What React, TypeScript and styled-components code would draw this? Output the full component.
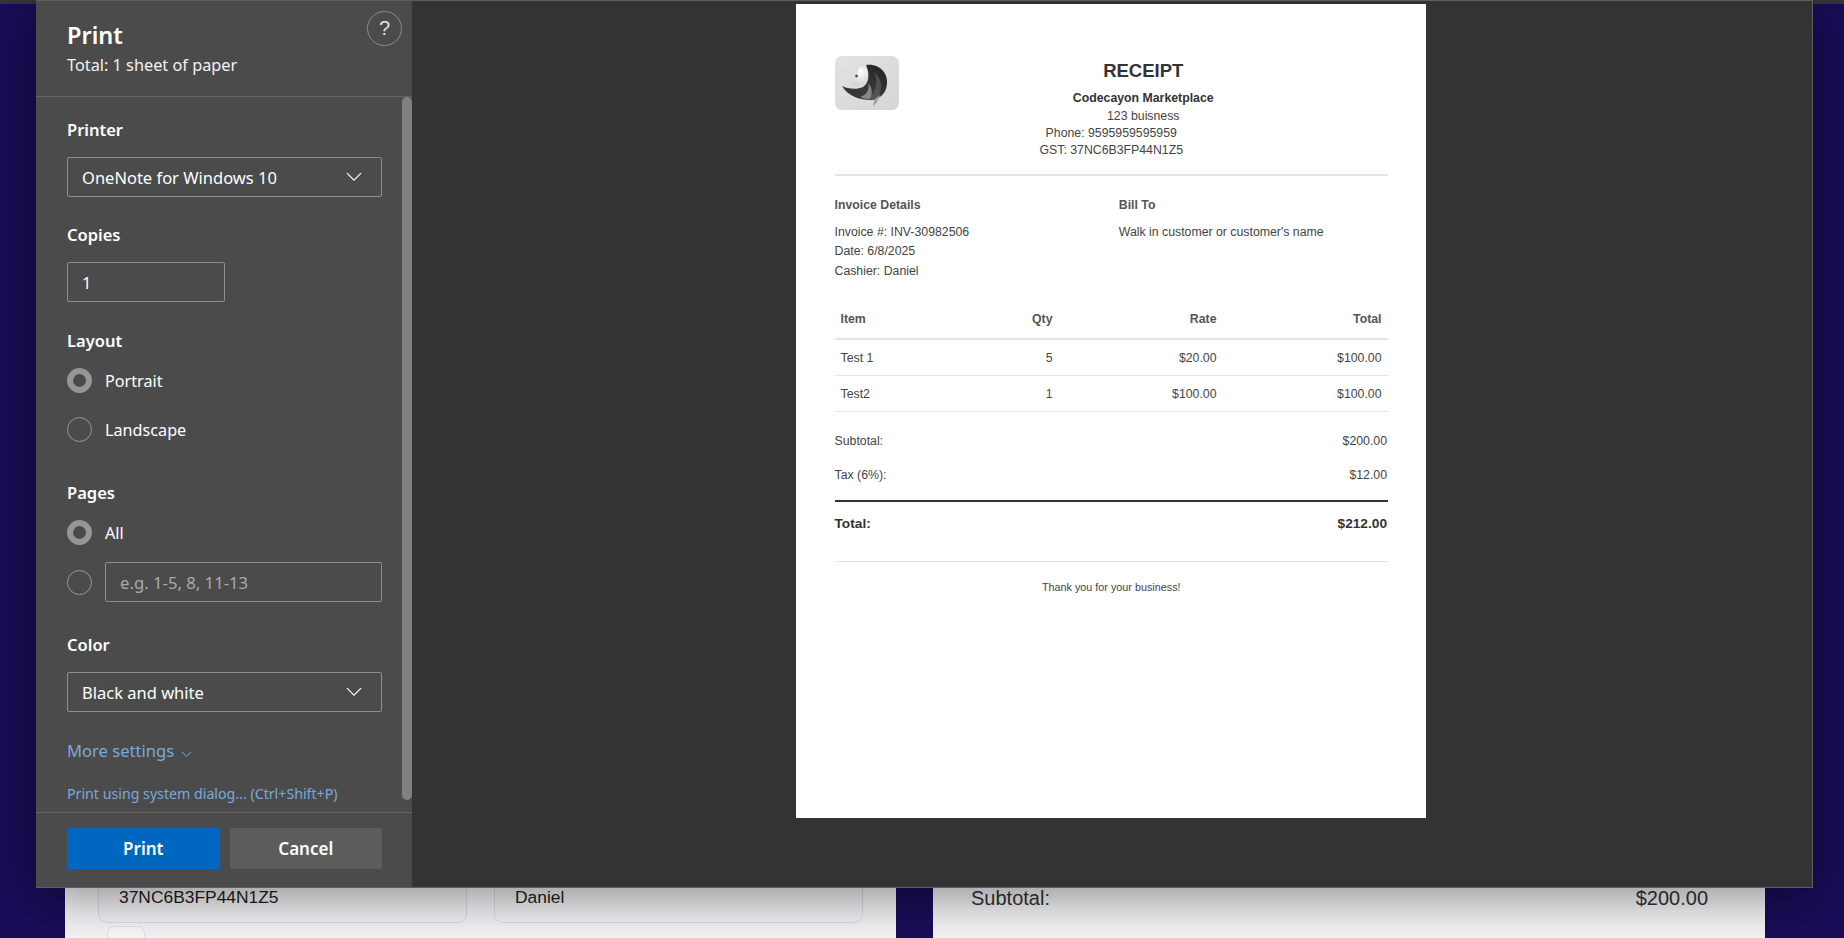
import React from "react";
import styled, { createGlobalStyle } from "styled-components";

const GlobalStyle = createGlobalStyle`
  html, body {
    margin: 0;
    padding: 0;
    height: 100%;
    overflow: hidden;
    background: #1a0c58;
  }
  * {
    box-sizing: border-box;
  }
`;

const Screen = styled.div`
  position: relative;
  width: 1844px;
  height: 938px;
  overflow: hidden;
  background: #1a0c58;
  font-family: "Liberation Sans", Arial, sans-serif;
`;

/* ---- page behind the print dialog ---- */

const TopStrip = styled.div`
  height: 4px;
  background: #363636;
`;

const Behind = styled.div`
  display: grid;
  grid-template-columns: 831px 832px;
  column-gap: 37px;
  padding-left: 65px;
  height: 934px;
`;

const PagePanel = styled.div`
  background: #f6f6f9;
  padding: ${({ $right }) => ($right ? "882px 57px 0 38px" : "0")};
  display: ${({ $right }) => ($right ? "block" : "flex")};
  flex-direction: column;
  justify-content: flex-end;
`;

const SummaryRow = styled.div`
  display: flex;
  justify-content: space-between;
  font-size: 20px;
  line-height: 24px;
  color: #333;
`;

const CardRow = styled.div`
  display: grid;
  grid-template-columns: 369px 369px;
  column-gap: 27px;
  padding: 0 33px;
`;

const FieldCard = styled.div`
  height: 50px;
  padding: 13px 20px 0;
  font-size: 17.4px;
  line-height: 22px;
  color: #1c1c1c;
  background: #f4f4f7;
  border: 1px solid #dcdce3;
  border-top: 0;
  border-radius: 0 0 9px 9px;
`;

const SmallKey = styled.div`
  width: 38px;
  height: 12px;
  margin: 3px 0 0 42px;
  background: #fafafc;
  border: 1px solid #e2e2e8;
  border-bottom: 0;
  border-radius: 7px 7px 0 0;
`;

/* ---- print dialog ---- */

const Dialog = styled.div`
  position: absolute;
  top: 0;
  left: 36px;
  width: 1777px;
  height: 888px;
  display: flex;
  border: 1px solid #5e5e5e;
  border-left: 0;
  background: #333;
  box-shadow: 0 8px 50px rgba(0, 0, 0, 0.46);
`;

const Sidebar = styled.div`
  width: 376px;
  display: flex;
  flex-direction: column;
  background: #4b4b4b;
  color: #fff;
  font-family: "Noto Sans", "Open Sans", sans-serif;
`;

const SideHeader = styled.div`
  position: relative;
  height: 96px;
  padding: 19px 31px 0;
  border-bottom: 1px solid #656565;
`;

const Title = styled.div`
  font-size: 23.5px;
  font-weight: 600;
  line-height: 30px;
`;

const Subtitle = styled.div`
  margin-top: 3px;
  font-size: 16.3px;
  line-height: 24px;
  color: #f2f2f2;
`;

const HelpButton = styled.div`
  position: absolute;
  top: 10px;
  right: 10px;
  width: 35px;
  height: 35px;
  display: flex;
  align-items: center;
  justify-content: center;
  border: 1px solid #8c8c8c;
  border-radius: 50%;
  font-family: "Liberation Sans", sans-serif;
  font-size: 20px;
  color: #e4e4e4;
`;

const SideBody = styled.div`
  flex: 1;
  display: flex;
  min-height: 0;
`;

const Controls = styled.div`
  flex: 1;
  padding: 22px 20px 0 31px;
`;

const Track = styled.div`
  width: 10px;
  padding-bottom: 12px;
`;

const Thumb = styled.div`
  height: 100%;
  background: #808080;
  border-radius: 5px;
`;

const Section = styled.div`
  margin-top: ${({ $top }) => $top || 0}px;
`;

const Label = styled.div`
  height: 22px;
  font-size: 16.5px;
  font-weight: 600;
  line-height: 22px;
`;

const Select = styled.div`
  height: 40px;
  margin-top: 16px;
  padding: 0 19px 0 14px;
  display: flex;
  align-items: center;
  justify-content: space-between;
  border: 1px solid #8e8e8e;
  border-radius: 2px;
  font-size: 16.5px;
`;

const CopiesInput = styled.div`
  width: 158px;
  height: 40px;
  margin-top: 16px;
  padding: 0 14px;
  display: flex;
  align-items: center;
  border: 1px solid #8e8e8e;
  border-radius: 2px;
  font-size: 16.5px;
`;

const RadioRow = styled.div`
  display: flex;
  align-items: center;
  gap: 13px;
  height: ${({ $tall }) => ($tall ? 40 : 25)}px;
  margin-top: ${({ $top }) => $top}px;
  font-size: 16.2px;
`;

const Radio = styled.span`
  flex: none;
  width: 25px;
  height: 25px;
  border-radius: 50%;
  border: ${({ $on }) => ($on ? "6.5px solid #969696" : "1px solid #969696")};
`;

const RangeInput = styled.div`
  flex: 1;
  height: 40px;
  padding: 0 14px;
  display: flex;
  align-items: center;
  border: 1px solid #8e8e8e;
  border-radius: 2px;
  font-size: 16.7px;
  color: #a9a9a9;
`;

const MoreSettings = styled.div`
  display: flex;
  align-items: center;
  gap: 7px;
  height: 24px;
  margin-top: 26px;
  font-size: 16.6px;
  color: #79a9dc;
`;

const SystemLink = styled.div`
  height: 20px;
  margin-top: 22px;
  font-size: 14.2px;
  line-height: 20px;
  color: #79a9dc;
`;

const SideFooter = styled.div`
  height: 75px;
  padding: 15px 30px 0 31px;
  display: flex;
  gap: 10px;
  border-top: 1px solid #656565;
`;

const FooterButton = styled.div`
  flex: 1;
  height: 41px;
  display: flex;
  align-items: center;
  justify-content: center;
  border-radius: 2px;
  font-size: 17px;
  font-weight: 600;
  background: ${({ $primary }) => ($primary ? "#0067c0" : "#5c5c5c")};
`;

const MoreChevron = styled.svg`
  flex: none;
  margin-top: 7px;
`;

const SelectChevron = styled.svg`
  flex: none;
`;

/* ---- preview ---- */

const Preview = styled.div`
  flex: 1;
  display: flex;
  justify-content: center;
  padding: 3px 2px 0 0;
`;

const Paper = styled.div`
  width: 630px;
  height: 814px;
  padding: 52px 38px 0 38.5px;
  background: #fff;
  color: #444;
  font-size: 12.3px;
`;

const ReceiptHead = styled.div`
  display: flex;
`;

const Logo = styled.svg`
  flex: none;
  width: 64px;
  height: 54px;
`;

const HeadText = styled.div`
  flex: 1;
  text-align: center;
`;

const ReceiptTitle = styled.div`
  height: 22px;
  margin-top: 4px;
  font-size: 18.5px;
  font-weight: bold;
  line-height: 22px;
  color: #333;
`;

const Company = styled.div`
  margin-top: 8px;
  height: 18px;
  font-size: 12.3px;
  font-weight: bold;
  line-height: 17px;
  color: #333;
`;

const HeadLine = styled.div`
  height: 17px;
  line-height: 17px;
  padding-right: ${({ $shift }) => ($shift ? 64 : 0)}px;
`;

const Divider = styled.div`
  height: ${({ $h }) => $h || 1}px;
  margin-top: ${({ $top }) => $top || 0}px;
  background: ${({ $dark }) => ($dark ? "#333" : "#e4e4e4")};
`;

const InfoGrid = styled.div`
  display: grid;
  grid-template-columns: 1fr 1fr;
  column-gap: 15px;
  margin-top: 21px;
`;

const InfoTitle = styled.div`
  height: 17px;
  margin-bottom: 9px;
  font-weight: bold;
  line-height: 17px;
  color: #555;
`;

const InfoLine = styled.div`
  height: 19.4px;
  line-height: 19.4px;
`;

const ItemsTable = styled.div`
  margin-top: 19px;
`;

const ItemRow = styled.div`
  display: grid;
  grid-template-columns: 160px 64px 164px 165px;
  align-items: center;
  height: ${({ $head }) => ($head ? 40 : 36)}px;
  border-bottom: ${({ $head }) => ($head ? "2px solid #e4e4e4" : "1px solid #e4e4e4")};
  font-weight: ${({ $head }) => ($head ? "bold" : "normal")};
  color: ${({ $head }) => ($head ? "#555" : "#444")};
`;

const Cell = styled.div`
  padding: 0 6px;
  text-align: ${({ $left }) => ($left ? "left" : "right")};
`;

const TotalLine = styled.div`
  display: flex;
  justify-content: space-between;
  height: 17px;
  margin-top: ${({ $top }) => $top}px;
  padding-right: 1px;
  line-height: 17px;
  font-size: ${({ $bold }) => ($bold ? 13.7 : 12.3)}px;
  font-weight: ${({ $bold }) => ($bold ? "bold" : "normal")};
  color: ${({ $bold }) => ($bold ? "#333" : "#444")};
`;

const ThankYou = styled.div`
  margin-top: 17px;
  height: 16px;
  line-height: 16px;
  font-size: 10.8px;
  text-align: center;
`;

const Chevron = () => (
  <SelectChevron width={16} height={10} viewBox="0 0 16 10" fill="none" stroke="currentColor" strokeWidth={1.2}>
    <path d="M1 1.2 L8 8.2 L15 1.2" />
  </SelectChevron>
);

const SmallChevron = () => (
  <MoreChevron width={11} height={6} viewBox="0 0 11 6" fill="none" stroke="currentColor" strokeWidth={1}>
    <path d="M0.6 0.8 L5.5 5.2 L10.4 0.8" />
  </MoreChevron>
);

const BirdLogo = () => (
  <Logo viewBox="0 0 64 54">
    <defs>
      <linearGradient id="tile" x1="0" y1="0" x2="1" y2="1">
        <stop offset="0" stopColor="#e2e2e2" />
        <stop offset="1" stopColor="#d6d6d6" />
      </linearGradient>
      <linearGradient id="wing" x1="1" y1="0" x2="0" y2="1">
        <stop offset="0" stopColor="#1f1f1f" />
        <stop offset="0.55" stopColor="#3a3a3a" />
        <stop offset="1" stopColor="#333" />
      </linearGradient>
      <radialGradient id="head" cx="0.55" cy="0.3" r="0.7">
        <stop offset="0" stopColor="#ffffff" />
        <stop offset="1" stopColor="#d2d2d2" />
      </radialGradient>
    </defs>
    <rect x="0" y="0" width="64" height="54" rx="7" fill="url(#tile)" />
    <path
      d="M31 9 C44 7 53 17 52 27 C52 37 44 44 36 44 C24 44 13 40 7 30 C13 33 22 34 28 31 C34 27 35 18 31 9 Z"
      fill="url(#wing)"
    />
    <path d="M39 16 C43 24 42 36 33 43 C37 44 40 44 43 42 C48 33 47 22 39 16 Z" fill="#666" opacity="0.6" />
    <path d="M33 27 C35 33 32 39 25 41 C29 43 32 43 35 43 C38 37 37 31 33 27 Z" fill="#868686" />
    <path d="M45 39 C44 44 41 48 38 50 C38 46 40 42 45 39 Z" fill="#a2a2a2" />
    <path
      d="M27 10 C33 11 35 18 31 25 C27 29 21 30 15 29 C21 27 24 24 22 20 C22 15 24 11 27 10 Z"
      fill="url(#head)"
    />
    <circle cx="21.5" cy="20" r="1.3" fill="#3a3a3a" />
  </Logo>
);

const items = [
  { name: "Test 1", qty: 5, rate: "$20.00", total: "$100.00" },
  { name: "Test2", qty: 1, rate: "$100.00", total: "$100.00" },
];

const App: React.FC = () => {
  return (
    <Screen>
      <GlobalStyle />
      <TopStrip />
      <Behind>
        <PagePanel>
          <CardRow>
            <FieldCard>37NC6B3FP44N1Z5</FieldCard>
            <FieldCard>Daniel</FieldCard>
          </CardRow>
          <SmallKey />
        </PagePanel>
        <PagePanel $right>
          <SummaryRow>
            <span>Subtotal:</span>
            <span>$200.00</span>
          </SummaryRow>
        </PagePanel>
      </Behind>

      <Dialog>
        <Sidebar>
          <SideHeader>
            <Title>Print</Title>
            <Subtitle>Total: 1 sheet of paper</Subtitle>
            <HelpButton>?</HelpButton>
          </SideHeader>
          <SideBody>
            <Controls>
              <Section>
                <Label>Printer</Label>
                <Select>
                  OneNote for Windows 10
                  <Chevron />
                </Select>
              </Section>
              <Section $top={27}>
                <Label>Copies</Label>
                <CopiesInput>1</CopiesInput>
              </Section>
              <Section $top={28}>
                <Label>Layout</Label>
                <RadioRow $top={16}>
                  <Radio $on />
                  Portrait
                </RadioRow>
                <RadioRow $top={24}>
                  <Radio />
                  Landscape
                </RadioRow>
              </Section>
              <Section $top={40}>
                <Label>Pages</Label>
                <RadioRow $top={16}>
                  <Radio $on />
                  All
                </RadioRow>
                <RadioRow $top={17} $tall>
                  <Radio />
                  <RangeInput>e.g. 1-5, 8, 11-13</RangeInput>
                </RadioRow>
              </Section>
              <Section $top={32}>
                <Label>Color</Label>
                <Select>
                  Black and white
                  <Chevron />
                </Select>
              </Section>
              <MoreSettings>
                More settings
                <SmallChevron />
              </MoreSettings>
              <SystemLink>Print using system dialog... (Ctrl+Shift+P)</SystemLink>
            </Controls>
            <Track>
              <Thumb />
            </Track>
          </SideBody>
          <SideFooter>
            <FooterButton $primary>Print</FooterButton>
            <FooterButton>Cancel</FooterButton>
          </SideFooter>
        </Sidebar>

        <Preview>
          <Paper>
            <ReceiptHead>
              <BirdLogo />
              <HeadText>
                <ReceiptTitle>RECEIPT</ReceiptTitle>
                <Company>Codecayon Marketplace</Company>
                <HeadLine>123 buisness</HeadLine>
                <HeadLine $shift>Phone: 9595959595959</HeadLine>
                <HeadLine $shift>GST: 37NC6B3FP44N1Z5</HeadLine>
              </HeadText>
            </ReceiptHead>
            <Divider $h={2} $top={15} />
            <InfoGrid>
              <div>
                <InfoTitle>Invoice Details</InfoTitle>
                <InfoLine>Invoice #: INV-30982506</InfoLine>
                <InfoLine>Date: 6/8/2025</InfoLine>
                <InfoLine>Cashier: Daniel</InfoLine>
              </div>
              <div>
                <InfoTitle>Bill To</InfoTitle>
                <InfoLine>Walk in customer or customer's name</InfoLine>
              </div>
            </InfoGrid>
            <ItemsTable>
              <ItemRow $head>
                <Cell $left>Item</Cell>
                <Cell>Qty</Cell>
                <Cell>Rate</Cell>
                <Cell>Total</Cell>
              </ItemRow>
              {items.map((item) => (
                <ItemRow key={item.name}>
                  <Cell $left>{item.name}</Cell>
                  <Cell>{item.qty}</Cell>
                  <Cell>{item.rate}</Cell>
                  <Cell>{item.total}</Cell>
                </ItemRow>
              ))}
            </ItemsTable>
            <TotalLine $top={21}>
              <span>Subtotal:</span>
              <span>$200.00</span>
            </TotalLine>
            <TotalLine $top={17}>
              <span>Tax (6%):</span>
              <span>$12.00</span>
            </TotalLine>
            <Divider $h={2} $dark $top={16} />
            <TotalLine $bold $top={13}>
              <span>Total:</span>
              <span>$212.00</span>
            </TotalLine>
            <Divider $top={29} />
            <ThankYou>Thank you for your business!</ThankYou>
          </Paper>
        </Preview>
      </Dialog>
    </Screen>
  );
};

export default App;
